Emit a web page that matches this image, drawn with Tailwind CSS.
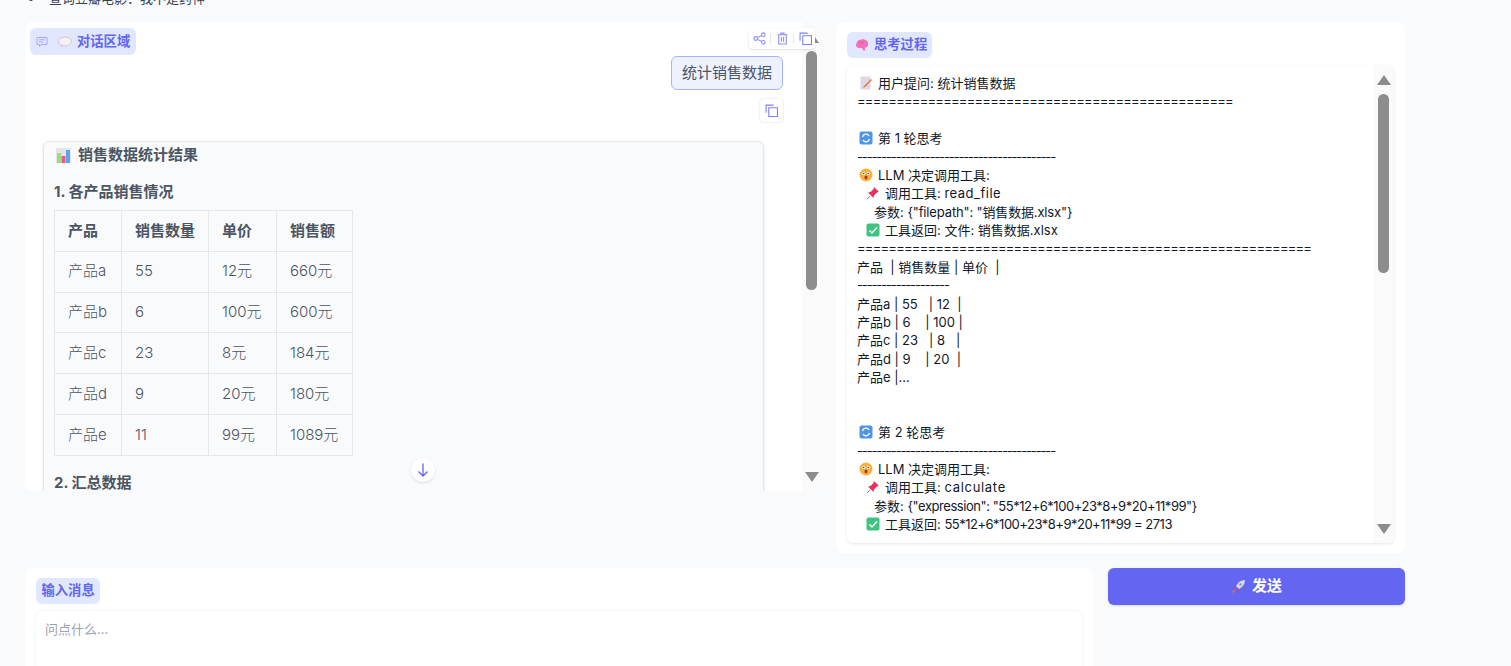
<!DOCTYPE html>
<html lang="en">
<head>
    <meta charset="UTF-8">
    <meta name="viewport" content="width=device-width, initial-scale=1.0">
    <title>Chat</title>
    <script src="https://cdn.jsdelivr.net/npm/@tailwindcss/browser@4"></script>
</head>
<body class="bg-[#f9fafb] h-[666px] overflow-hidden text-[#374151] font-['Inter','Noto_Sans_CJK_SC',sans-serif]">

<div class="h-[22px] relative overflow-hidden">
    <div class="absolute top-[-11px] left-[29px] flex items-center text-[13px] text-[#374151]">
        <span class="w-1 h-1 rounded-full bg-[#374151] mr-4"></span>
        <span>查询豆瓣电影：我不是药神</span>
    </div>
</div>

<div class="flex pl-[25px] gap-[14px] items-start">
    <!-- chat -->
    <section class="relative w-[797px] h-[469px] bg-white rounded-lg overflow-hidden">
        <div class="absolute left-[5px] top-[6px] h-[27px] pl-[6px] pr-[6px] flex items-center gap-[10px] bg-[#e0e7ff] rounded-md text-[13.300px] font-bold text-[#6366f1]">
            <svg class="w-3 h-3" viewBox="0 0 12 12" fill="none" stroke="#a5a8f5"><path d="M1 1.500h10v7H5L3.500 10.500V8.500H1z M3 3.800h6 M3 6h4"/></svg>
            <span class="flex items-center gap-[5px]">
                <svg class="w-[14px] h-[14px]" viewBox="0 0 14 14"><ellipse cx="7" cy="6.500" rx="6.500" ry="4.500" fill="#f6eff4" stroke="#cdbcc9" stroke-width=".8"/><path d="M3 10l-.5 2 3-1.500z" fill="#cdbcc9"/></svg>
                对话区域
            </span>
        </div>

        <div class="absolute right-[7px] top-[6px] z-10 h-[21px] flex items-center gap-[4.500px] px-[3.500px] bg-white rounded shadow-sm">
            <svg class="w-[13px] h-[13px]" viewBox="0 0 12 12" fill="none" stroke="#8b8df3"><circle cx="2.500" cy="6" r="1.700"/><circle cx="9.500" cy="2.500" r="1.700"/><circle cx="9.500" cy="9.500" r="1.700"/><path d="M4 5.200l4-2 M4 6.800l4 2"/></svg>
            <span class="w-px h-[10px] bg-gray-200"></span>
            <svg class="w-[13px] h-[13px]" viewBox="0 0 12 12" fill="none" stroke="#8b8df3"><path d="M1.500 2.500h9 M4.500 2.500V1h3v1.500 M2.500 2.500V11h7V2.500 M5 4.500v4.500 M7 4.500v4.500"/></svg>
            <span class="w-px h-[10px] bg-gray-200"></span>
            <svg class="w-[13px] h-[13px]" viewBox="0 0 12 12" fill="none" stroke="#7c7ff2"><path d="M3.500 3.500h8v8h-8z M1 8V1h7"/></svg>
        </div>

        <div class="flex flex-col items-end pt-[34px] pr-[39px]">
            <div class="h-[34px] px-[10px] flex items-center border border-[#a5b4fc] bg-[#eef2ff] rounded-md text-[15px] text-[#4b5563]">统计销售数据</div>
            <div class="mt-[9px] w-[23px] h-[23px] flex items-center justify-center bg-white rounded shadow-[0_0_2px_rgba(0,0,0,0.2)]">
                <svg class="w-[13px] h-[13px]" viewBox="0 0 12 12" fill="none" stroke="#7c7ff2"><path d="M3.500 3.500h8v8h-8z M1 8V1h7"/></svg>
            </div>
        </div>

        <div class="ml-[18px] mt-[19px] w-[721px] h-[400px] border border-[#e5e7eb] rounded-md bg-[#f9fafb] shadow-sm text-[#4b5563] pl-[10px] text-[15px]">
            <h3 class="flex items-center gap-[7px] pl-[2px] h-[26px] font-bold">
                <svg class="w-[15px] h-[15px]" viewBox="0 0 15 15"><rect width="15" height="15" fill="#e6e4e8"/><rect x="1" y="5" width="4" height="10" fill="#9bdc84"/><rect x="5.500" y="8" width="4" height="7" fill="#ea5a8c"/><rect x="10" y="2" width="4" height="13" fill="#5ba7e6"/></svg>
                销售数据统计结果
            </h3>
            <h4 class="mt-[14px] font-bold leading-5">1. 各产品销售情况</h4>
            <table class="mt-[8px] border-collapse w-[299px] font-light">
                <thead>
                    <tr class="h-[40.800px]">
                        <th class="w-[67px] border border-[#e5e7eb] text-left font-bold pl-[13px]">产品</th>
                        <th class="w-[87px] border border-[#e5e7eb] text-left font-bold pl-[13px]">销售数量</th>
                        <th class="w-[68px] border border-[#e5e7eb] text-left font-bold pl-[13px]">单价</th>
                        <th class="border border-[#e5e7eb] text-left font-bold pl-[13px]">销售额</th>
                    </tr>
                </thead>
                <tbody>
                    <tr class="h-[40.800px]"><td class="border border-[#e5e7eb] pl-[13px]">产品a</td><td class="border border-[#e5e7eb] pl-[13px]">55</td><td class="border border-[#e5e7eb] pl-[13px]">12元</td><td class="border border-[#e5e7eb] pl-[13px]">660元</td></tr>
                    <tr class="h-[40.800px]"><td class="border border-[#e5e7eb] pl-[13px]">产品b</td><td class="border border-[#e5e7eb] pl-[13px]">6</td><td class="border border-[#e5e7eb] pl-[13px]">100元</td><td class="border border-[#e5e7eb] pl-[13px]">600元</td></tr>
                    <tr class="h-[40.800px]"><td class="border border-[#e5e7eb] pl-[13px]">产品c</td><td class="border border-[#e5e7eb] pl-[13px]">23</td><td class="border border-[#e5e7eb] pl-[13px]">8元</td><td class="border border-[#e5e7eb] pl-[13px]">184元</td></tr>
                    <tr class="h-[40.800px]"><td class="border border-[#e5e7eb] pl-[13px]">产品d</td><td class="border border-[#e5e7eb] pl-[13px]">9</td><td class="border border-[#e5e7eb] pl-[13px]">20元</td><td class="border border-[#e5e7eb] pl-[13px]">180元</td></tr>
                    <tr class="h-[40.800px]"><td class="border border-[#e5e7eb] pl-[13px]">产品e</td><td class="border border-[#e5e7eb] pl-[13px]">11</td><td class="border border-[#e5e7eb] pl-[13px]">99元</td><td class="border border-[#e5e7eb] pl-[13px]">1089元</td></tr>
                </tbody>
            </table>
            <h4 class="mt-[17px] font-bold leading-5">2. 汇总数据</h4>
        </div>

        <!-- scrollbar -->
        <div class="absolute right-0 top-0 w-[20px] h-full bg-[#fafafa]">
            <div class="absolute left-[3px] top-[11px] w-0 h-0 border-x-[7px] border-x-transparent border-b-[10px] border-b-[#8c8c8c]"></div>
            <div class="absolute left-[4px] top-[29px] w-[11px] h-[239px] rounded-full bg-[#8c8c8c]"></div>
            <div class="absolute left-[3px] top-[450px] w-0 h-0 border-x-[7px] border-x-transparent border-t-[10px] border-t-[#8c8c8c]"></div>
        </div>

        <button class="absolute left-[386px] top-[436px] w-6 h-6 flex items-center justify-center bg-white rounded-full shadow">
            <svg class="w-4 h-4" viewBox="0 0 16 16" fill="none" stroke="#6366f1" stroke-width="1.300"><path d="M8 1.500v12.500 M3.500 9.500L8 14l4.500-4.500"/></svg>
        </button>
    </section>

    <!-- thinking -->
    <section class="w-[569px] h-[531px] bg-white rounded-lg px-[11px] pt-[10px]">
        <div class="inline-flex items-center gap-[5px] h-[26px] pl-2 pr-[5px] bg-[#e0e7ff] rounded-md text-[13.300px] font-bold text-[#6366f1]">
            <svg class="w-[14px] h-[14px]" viewBox="0 0 15 15"><path d="M2 4.500C3 2 7 1 10 1.500c3 .5 4.500 3 4 6-.5 2-1.500 3-3.500 3L11 13.500 8.500 13 8 11C4 11.500 1 10 1 7.500z" fill="#f072b6"/><path d="M5 4c1 1 1 2 0 3 M9 3.500c-1 1-1 2 0 3" fill="none" stroke="#d14f97" stroke-width=".7"/></svg>
            思考过程
        </div>
        <div class="relative mt-[7px] h-[478px] bg-white rounded-md shadow-[0_1px_3px_rgba(0,0,0,0.1)] overflow-hidden">
            <div class="pl-[10px] pt-[9px] text-[13px] leading-[18.380px] text-[#111827]">
                <div class="flex items-center gap-[5px] pl-[2px]"><svg class="w-[14px] h-[14px]" viewBox="0 0 14 14"><rect x="1.500" y="0.500" width="10" height="13" fill="#dfd8e4"/><path d="M13 4L6 11l-2 1 1-2 7-7z" fill="#f0703a"/></svg>用户提问: 统计销售数据</div>
                <div class="tracking-[-0.770px]">================================================</div>
                <div>&nbsp;</div>
                <div class="flex items-center gap-[5px] pl-[2px]"><svg class="w-[14px] h-[14px]" viewBox="0 0 14 14"><rect x="0.500" y="0.500" width="13" height="13" rx="2" fill="#4f95e8"/><path d="M3.500 6a3.500 3.500 0 0 1 6.500-1 M10.500 8a3.500 3.500 0 0 1-6.500 1" fill="none" stroke="#fff" stroke-width="1.300"/></svg>第 1 轮思考</div>
                <div class="tracking-[-1.150px]">-----------------------------------------</div>
                <div class="flex items-center gap-[5px] pl-[2px]"><svg class="w-[14px] h-[14px]" viewBox="0 0 14 14"><circle cx="7" cy="7" r="6.500" fill="#fbb03b"/><circle cx="4.800" cy="5.500" r="1.500" fill="#fff"/><circle cx="9.200" cy="5.500" r="1.500" fill="#fff"/><circle cx="4.800" cy="5.500" r=".7" fill="#333"/><circle cx="9.200" cy="5.500" r=".7" fill="#333"/><ellipse cx="7" cy="9.500" rx="1.500" ry="2" fill="#a33"/></svg>LLM 决定调用工具:</div>
                <div class="flex items-center gap-[5px] pl-[9px]"><svg class="w-[14px] h-[14px]" viewBox="0 0 14 14"><path d="M8 1l5 5-2 .5-3 3L7.500 12 2 6.500 4.500 6l3-3z" fill="#e8305f"/><path d="M4 10l-3 3" stroke="#888"/></svg><span>调用工具: <span class="tracking-[0.500px]">read_file</span></span></div>
                <div class="pl-[17px]">参数: <span class="tracking-[-0.150px]">{"filepath": "销售数据.xlsx"}</span></div>
                <div class="flex items-center gap-[5px] pl-[9px]"><svg class="w-[14px] h-[14px]" viewBox="0 0 14 14"><rect x="0.500" y="0.500" width="13" height="13" rx="2" fill="#3fc380"/><path d="M3.500 7.500l2.500 2.500 5-5.500" fill="none" stroke="#fff" stroke-width="1.500"/></svg>工具返回: 文件: 销售数据.xlsx</div>
                <div class="tracking-[-0.770px]">==========================================================</div>
                <div class="whitespace-pre">产品  | 销售数量 | 单价  |</div>
                <div class="tracking-[-1.150px]">-------------------</div>
                <div class="whitespace-pre">产品a | 55   | 12  |</div>
                <div class="whitespace-pre">产品b | 6    | 100 |</div>
                <div class="whitespace-pre">产品c | 23   | 8   |</div>
                <div class="whitespace-pre">产品d | 9    | 20  |</div>
                <div>产品e |...</div>
                <div>&nbsp;</div>
                <div>&nbsp;</div>
                <div class="flex items-center gap-[5px] pl-[2px]"><svg class="w-[14px] h-[14px]" viewBox="0 0 14 14"><rect x="0.500" y="0.500" width="13" height="13" rx="2" fill="#4f95e8"/><path d="M3.500 6a3.500 3.500 0 0 1 6.500-1 M10.500 8a3.500 3.500 0 0 1-6.500 1" fill="none" stroke="#fff" stroke-width="1.300"/></svg>第 2 轮思考</div>
                <div class="tracking-[-1.150px]">-----------------------------------------</div>
                <div class="flex items-center gap-[5px] pl-[2px]"><svg class="w-[14px] h-[14px]" viewBox="0 0 14 14"><circle cx="7" cy="7" r="6.500" fill="#fbb03b"/><circle cx="4.800" cy="5.500" r="1.500" fill="#fff"/><circle cx="9.200" cy="5.500" r="1.500" fill="#fff"/><circle cx="4.800" cy="5.500" r=".7" fill="#333"/><circle cx="9.200" cy="5.500" r=".7" fill="#333"/><ellipse cx="7" cy="9.500" rx="1.500" ry="2" fill="#a33"/></svg>LLM 决定调用工具:</div>
                <div class="flex items-center gap-[5px] pl-[9px]"><svg class="w-[14px] h-[14px]" viewBox="0 0 14 14"><path d="M8 1l5 5-2 .5-3 3L7.500 12 2 6.500 4.500 6l3-3z" fill="#e8305f"/><path d="M4 10l-3 3" stroke="#888"/></svg><span>调用工具: <span class="tracking-[0.700px]">calculate</span></span></div>
                <div class="pl-[17px]">参数: <span class="tracking-[-0.450px]">{"expression": "55*12+6*100+23*8+9*20+11*99"}</span></div>
                <div class="flex items-center gap-[5px] pl-[9px]"><svg class="w-[14px] h-[14px]" viewBox="0 0 14 14"><rect x="0.500" y="0.500" width="13" height="13" rx="2" fill="#3fc380"/><path d="M3.500 7.500l2.500 2.500 5-5.500" fill="none" stroke="#fff" stroke-width="1.500"/></svg><span>工具返回: <span class="tracking-[-0.500px]">55*12+6*100+23*8+9*20+11*99 = 2713</span></span></div>
            </div>
            <div class="absolute right-0 top-0 w-[20px] h-full bg-[#fafafa]">
                <div class="absolute left-[3px] top-[10px] w-0 h-0 border-x-[7px] border-x-transparent border-b-[10px] border-b-[#8c8c8c]"></div>
                <div class="absolute left-[4px] top-[29px] w-[11px] h-[179px] rounded-full bg-[#8c8c8c]"></div>
                <div class="absolute left-[3px] top-[459px] w-0 h-0 border-x-[7px] border-x-transparent border-t-[10px] border-t-[#8c8c8c]"></div>
            </div>
        </div>
    </section>
</div>

<div class="flex pl-[25px] gap-[15px] mt-[15px] items-start">
    <section class="w-[1068px] h-[110px] bg-white rounded-lg px-[11px] pt-[9px]">
        <div class="inline-flex items-center h-[26px] px-[5.500px] bg-[#e0e7ff] rounded-md text-[13.300px] font-bold text-[#6366f1]">输入消息</div>
        <div class="mt-[7px] h-[60px] bg-white rounded-md shadow-[0_0_3px_rgba(0,0,0,0.08)] px-[9px] pt-[9px] text-[13px] text-[#9ca3af]">问点什么...</div>
    </section>
    <button class="w-[297px] h-[37px] flex items-center justify-center gap-[6px] bg-[#6366f1] rounded-md shadow text-white text-[15px] font-bold">
        <svg class="w-[15px] h-[15px]" viewBox="0 0 15 15"><path d="M14 1c-4 0-7 2-9 6l3 3c4-2 6-5 6-9z" fill="#d9d6de"/><circle cx="9.500" cy="5.500" r="1.300" fill="#7aa7d8"/><path d="M5 7L2 8l1.500 1z M8 10l-1 3-1-1.500z" fill="#e8305f"/><path d="M4 11l-2.500 2.500" stroke="#f0703a" stroke-width="1.500"/></svg>
        发送
    </button>
</div>

</body>
</html>
